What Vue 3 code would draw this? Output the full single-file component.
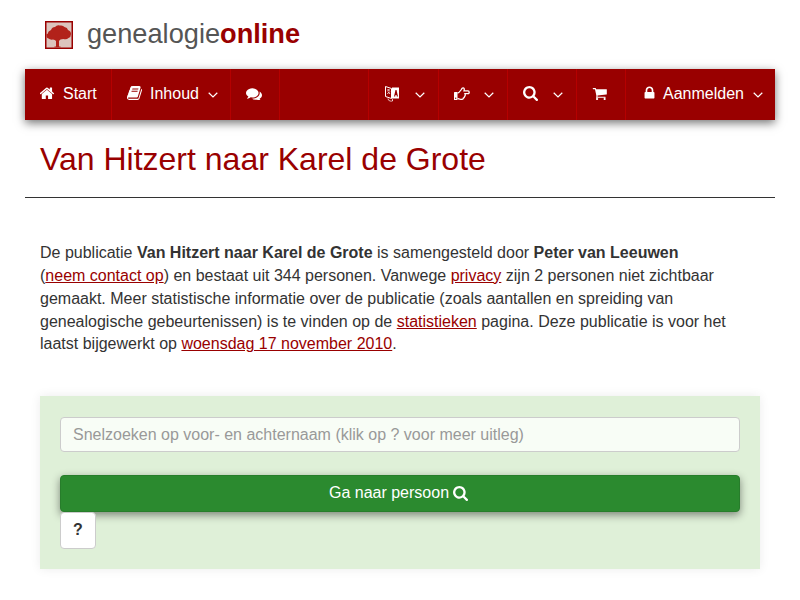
<script setup>
const icons = {
  home: 'M1408 992v480q0 26-19 45t-45 19h-384v-384h-256v384h-384q-26 0-45-19t-19-45v-480q0-1 .5-3t.5-3l575-474 575 474q1 2 1 6zm223-69l-62 74q-8 9-21 11h-3q-13 0-21-7l-692-577-692 577q-12 8-24 7-13-2-21-11l-62-74q-8-10-7-23.5t11-21.5l719-599q32-26 76-26t76 26l244 204v-195q0-14 9-23t23-9h192q14 0 23 9t9 23v408l219 182q10 8 11 21.5t-7 23.5z',
  book: 'M1703 478q40 57 18 129l-275 906q-19 64-76.5 107.5t-122.5 43.5h-923q-77 0-148.5-53.5t-99.5-131.5q-24-67-2-127 0-4 3-27t4-37q1-8-3-21.5t-3-19.5q2-11 8-21t16.5-23.5 16.5-23.5q23-38 45-91.5t30-91.5q3-10 .5-30t-.5-28q3-11 17-28t17-23q21-36 42-92t25-90q1-9-2.5-32t.5-28q4-13 22-30.5t22-22.5q19-26 42.5-84.5t27.5-96.5q1-8-3-25.5t-2-26.5q2-8 9-18t18-23 17-21q8-12 16.5-30.5t15-35 16-36 19.5-32 26.5-23.5 36-11.5 47.5 5.5l-1 3q38-9 51-9h761q74 0 114 56t18 130l-274 906q-36 119-71.5 153.5t-128.5 34.5h-869q-27 0-38 15-11 16-1 43 24 70 144 70h923q29 0 56-15.5t35-41.5l300-987q7-22 5-57 38 15 59 43zm-1064 2q-4 13 2 22.5t20 9.5h608q13 0 25.5-9.5t16.5-22.5l21-64q4-13-2-22.5t-20-9.5h-608q-13 0-25.5 9.5t-16.5 22.5zm-83 256q-4 13 2 22.5t20 9.5h608q13 0 25.5-9.5t16.5-22.5l21-64q4-13-2-22.5t-20-9.5h-608q-13 0-25.5 9.5t-16.5 22.5z',
  comments: 'M1408 768q0 139-94 257t-256.5 186.5-353.5 68.5q-86 0-176-16-124 88-278 128-36 9-86 16h-3q-11 0-20.5-8t-11.5-21q-1-3-1-6.5t.5-6.5 2-6l2.5-5 3.5-5.5 4-5 4.5-5 4-4.5q5-6 23-25t26-29.5 22.5-29 25-38.5 20.5-44q-124-72-195-177t-71-224q0-139 94-257t256.5-186.5 353.5-68.5 353.5 68.5 256.5 186.5 94 257zm384 256q0 120-71 224.5t-195 176.5q10 24 20.5 44t25 38.5 22.5 29 26 29.5 23 25q1 1 4 4.5t4.5 5 4 5 3.5 5.5l2.5 5 2 6 .5 6.5-1 6.5q-3 14-13 22t-22 7q-50-7-86-16-154-40-278-128-90 16-176 16-271 0-472-132 58 4 88 4 161 0 309-45t264-129q125-92 192-212t67-254q0-77-23-152 129 71 204 178t75 230z',
  search: 'M1216 832q0-185-131.5-316.5t-316.5-131.5-316.5 131.5-131.5 316.5 131.5 316.5 316.5 131.5 316.5-131.5 131.5-316.5zm512 832q0 52-38 90t-90 38q-54 0-90-38l-343-342q-179 124-399 124-143 0-273.5-55.5t-225-150-150-225-55.5-273.5 55.5-273.5 150-225 225-150 273.5-55.5 273.5 55.5 225 150 150 225 55.5 273.5q0 220-124 399l343 343q37 37 37 90z',
  cart: 'M704 1536q0 52-38 90t-90 38-90-38-38-90 38-90 90-38 90 38 38 90zm896 0q0 52-38 90t-90 38-90-38-38-90 38-90 90-38 90 38 38 90zm128-1088v512q0 24-16.5 42.5t-40.5 21.5l-1044 122q13 60 13 70 0 16-24 64h920q26 0 45 19t19 45-19 45-45 19h-1024q-26 0-45-19t-19-45q0-11 8-31.5t16-36 21.5-40 15.5-29.5l-177-823h-204q-26 0-45-19t-19-45 19-45 45-19h256q16 0 28.5 6.5t19.5 15.5 13 24.5 8 26 5.5 29.5 4.5 26h1201q26 0 45 19t19 45z',
  lock: 'M640 768h512v-192q0-106-75-181t-181-75-181 75-75 181v192zm832 96v576q0 40-28 68t-68 28h-960q-40 0-68-28t-28-68v-576q0-40 28-68t68-28h32v-192q0-184 132-316t316-132 316 132 132 316v192h32q40 0 68 28t28 68z'
}
</script>

<template>
  <div class="page">
    <header class="brand">
      <svg class="logo" width="28" height="28" viewBox="0 0 28 28">
        <rect x="0.75" y="0.75" width="26.500" height="26.500" fill="#dcc4bd" stroke="#990000" stroke-width="1.500" />
        <path d="M2.500 13q.5-3 3.500-4 1-3 4-3 2-2.500 5-1.500 3-.5 4.500 1.500 3 .5 3.500 3 3 1 3 4 0 3-2.500 4-2 2-5 1-2 0-3 .5-1 .5-1.500 1.500v5.500h1.500v1h-6v-1h1.500V20q-1-1.500-3-1.500-3 .5-4.500-1-2.500-.5-2-4.500z" fill="#b2221a" />
      </svg>
      <span class="brand-name">genealogie<b>online</b></span>
    </header>

    <nav class="menu">
      <a class="item start">
        <svg class="ico up" width="15" height="12" viewBox="64 192 1664 1344"><path :d="icons.home" /></svg>
        <span>Start</span>
      </a>
      <a class="item inhoud">
        <svg class="ico up" width="15" height="14" viewBox="64 128 1664 1536"><path :d="icons.book" /></svg>
        <span>Inhoud</span>
        <svg class="caret" width="10" height="6" viewBox="0 0 10 6"><path d="M.7.8 5 5 9.3.8" /></svg>
      </a>
      <a class="item chat">
        <svg class="ico" width="16" height="13" viewBox="0 128 1792 1408"><path :d="icons.comments" /></svg>
      </a>
      <div class="item spacer"></div>
      <a class="item icon-drop lang">
        <svg class="ico" width="16" height="17" viewBox="0 0 16 17">
          <path d="M1.500 1.500 7.500 3.500v10L1.500 11.500z" fill="none" stroke="#fff" />
          <path d="M8 2.500h7v11H8z" fill="#fff" />
          <path d="m10 11.500 1.500-6.500h1l1.500 6.500h-1.200l-.3-1.500h-1l-.3 1.500z" fill="#990000" />
          <path d="M3 5h3M4.500 4.500v1M3.300 9 5.800 6.500M4 6.500l2 2.500" stroke="#fff" stroke-width=".8" fill="none" />
          <path d="M4 13.500q0 2 2 2.500 2 .5 3-.5M8.500 14v2" stroke="#fff" stroke-width=".7" fill="none" />
        </svg>
        <svg class="caret" width="10" height="6" viewBox="0 0 10 6"><path d="M.7.8 5 5 9.3.8" /></svg>
      </a>
      <a class="item icon-drop">
        <svg class="ico" width="16" height="13" viewBox="0 0 16 13">
          <rect x="0" y="5" width="3.500" height="8" rx=".6" />
          <circle cx="1.700" cy="11.300" r=".7" fill="#990000" />
          <path d="M3.500 6C5 6 6 4.500 7 3 7.500 2 8 .8 9 .8 10.200.8 10.600 2 10 3.900h4c1.600 0 1.600 2.800 0 2.800h-3c.5 1.300.1 2.300-.5 2.800 0 1-.5 1.500-1 1.500 0 1-1 1.400-2 1.400-1.500 0-2.500-.6-4-1" fill="none" stroke="#fff" stroke-width="1.300" />
        </svg>
        <svg class="caret" width="10" height="6" viewBox="0 0 10 6"><path d="M.7.8 5 5 9.3.8" /></svg>
      </a>
      <a class="item icon-drop">
        <svg class="ico" width="15" height="15" viewBox="64 128 1664 1664"><path :d="icons.search" /></svg>
        <svg class="caret" width="10" height="6" viewBox="0 0 10 6"><path d="M.7.8 5 5 9.3.8" /></svg>
      </a>
      <a class="item cart">
        <svg class="ico" width="15" height="13" viewBox="0 128 1728 1536"><path :d="icons.cart" /></svg>
      </a>
      <a class="item login">
        <svg class="ico up" width="11" height="13" viewBox="256 128 1280 1408"><path :d="icons.lock" /></svg>
        <span>Aanmelden</span>
        <svg class="caret" width="10" height="6" viewBox="0 0 10 6"><path d="M.7.8 5 5 9.3.8" /></svg>
      </a>
    </nav>

    <h1>Van Hitzert naar Karel de Grote</h1>
    <hr />

    <p class="intro">
      De publicatie <b>Van Hitzert naar Karel de Grote</b> is samengesteld door <b>Peter van Leeuwen</b><br />
      (<a>neem contact op</a>) en bestaat uit 344 personen. Vanwege <a>privacy</a> zijn 2 personen niet zichtbaar<br />
      gemaakt. Meer statistische informatie over de publicatie (zoals aantallen en spreiding van<br />
      genealogische gebeurtenissen) is te vinden op de <a>statistieken</a> pagina. Deze publicatie is voor het<br />
      laatst bijgewerkt op <a>woensdag 17 november 2010</a>.
    </p>

    <section class="search-panel">
      <input class="search-input" type="text" placeholder="Snelzoeken op voor- en achternaam (klik op ? voor meer uitleg)" />
      <button class="go" type="button">
        Ga naar persoon
        <svg width="15" height="15" viewBox="64 128 1664 1664"><path :d="icons.search" fill="#fff" /></svg>
      </button>
      <button class="help" type="button">?</button>
    </section>
  </div>
</template>

<style>
body {
  background: #fff;
}
</style>

<style scoped>
.page {
  width: 750px;
  height: 600px;
  margin-left: 25px;
  font-family: "Liberation Sans", Arial, sans-serif;
  font-size: 16px;
  line-height: 22.86px;
  color: #333;
}

.brand {
  display: flex;
  align-items: center;
  height: 69px;
  padding-left: 20px;
}

.logo {
  margin-top: 1px;
}

.brand-name {
  margin-left: 14px;
  font-size: 27.2px;
  color: #555;
}

.brand-name b {
  color: #990000;
}

.menu {
  display: flex;
  height: 51px;
  background: #990000;
  box-shadow: 0 3px 9px rgba(0, 0, 0, 0.55);
  color: #fff;
}

.item {
  display: flex;
  align-items: center;
  flex: none;
  box-sizing: border-box;
  padding: 0 15px;
  border-right: 1px solid #b50000;
}

.item:last-child {
  border-right: none;
}

.ico {
  fill: #fff;
  flex: none;
  margin-bottom: 2px;
}

.ico.up {
  margin-bottom: 4px;
}

.caret {
  fill: none;
  stroke: #fff;
  stroke-width: 1.2;
  flex: none;
}

.start {
  width: 87px;
  gap: 8px;
}

.inhoud {
  width: 119px;
  gap: 8px;
}

.inhoud .caret {
  margin-left: 1px;
}

.chat {
  width: 49px;
}

.spacer {
  flex: 1;
}

.icon-drop {
  width: 69px;
  justify-content: space-between;
  padding-right: 13px;
}

.lang {
  width: 70px;
}

.cart {
  width: 49px;
}

.login {
  width: 149px;
  gap: 8px;
  padding-left: 18px;
}

.login .caret {
  margin-left: 1px;
}

h1 {
  margin: 20px 0 0;
  padding-left: 15px;
  font-size: 32px;
  font-weight: 400;
  line-height: 38px;
  color: #990000;
}

hr {
  margin: 19px 0 0;
  border: none;
  border-top: 1px solid #333;
}

.intro {
  margin: 44px 15px 0;
}

.intro a {
  color: #990000;
  text-decoration: underline;
}

.search-panel {
  margin: 40px 15px 0;
  padding: 21px 20px 20px;
  height: 173px;
  box-sizing: border-box;
  background: #dff0d8;
  box-shadow: 0 0 10px rgba(0, 0, 0, 0.08);
}

.search-input {
  display: block;
  width: 100%;
  height: 35px;
  box-sizing: border-box;
  padding: 0 12px;
  border: 1px solid #ccc;
  border-radius: 4px;
  background: #f8fdf6;
  font: inherit;
  outline: none;
}

.search-input::placeholder {
  color: #999;
  opacity: 1;
}

.go {
  display: flex;
  align-items: center;
  justify-content: center;
  gap: 4px;
  width: 100%;
  height: 37px;
  margin-top: 23px;
  border: 1px solid #277d2b;
  border-radius: 4px;
  background: #2b8a2f;
  color: #fff;
  font: inherit;
  box-shadow: 0 3px 8px rgba(0, 0, 0, 0.45);
}

.go svg {
  margin-right: 3px;
}

.help {
  display: block;
  position: relative;
  width: 36px;
  height: 37px;
  padding: 0;
  border: 1px solid #ccc;
  border-radius: 4px;
  background: #fff;
  color: #333;
  font: inherit;
  font-weight: 700;
}
</style>
